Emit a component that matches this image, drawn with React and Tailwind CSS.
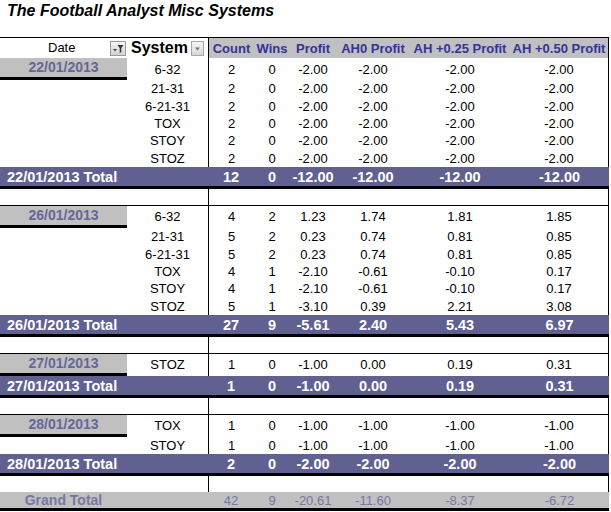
import React from 'react'

// Pivot table columns: Date | System | Count | Wins | Profit | AH0 | AH +0.25 | AH +0.50
const COLS = 'grid grid-cols-[127px_81px_46px_36px_46px_74px_100px_99px] w-[609px]'

const sections = [
  {
    date: '22/01/2013',
    rows: [
      ['6-32', 2, 0, '-2.00', '-2.00', '-2.00', '-2.00'],
      ['21-31', 2, 0, '-2.00', '-2.00', '-2.00', '-2.00'],
      ['6-21-31', 2, 0, '-2.00', '-2.00', '-2.00', '-2.00'],
      ['TOX', 2, 0, '-2.00', '-2.00', '-2.00', '-2.00'],
      ['STOY', 2, 0, '-2.00', '-2.00', '-2.00', '-2.00'],
      ['STOZ', 2, 0, '-2.00', '-2.00', '-2.00', '-2.00'],
    ],
    total: [12, 0, '-12.00', '-12.00', '-12.00', '-12.00'],
  },
  {
    date: '26/01/2013',
    rows: [
      ['6-32', 4, 2, '1.23', '1.74', '1.81', '1.85'],
      ['21-31', 5, 2, '0.23', '0.74', '0.81', '0.85'],
      ['6-21-31', 5, 2, '0.23', '0.74', '0.81', '0.85'],
      ['TOX', 4, 1, '-2.10', '-0.61', '-0.10', '0.17'],
      ['STOY', 4, 1, '-2.10', '-0.61', '-0.10', '0.17'],
      ['STOZ', 5, 1, '-3.10', '0.39', '2.21', '3.08'],
    ],
    total: [27, 9, '-5.61', '2.40', '5.43', '6.97'],
  },
  {
    date: '27/01/2013',
    rows: [['STOZ', 1, 0, '-1.00', '0.00', '0.19', '0.31']],
    total: [1, 0, '-1.00', '0.00', '0.19', '0.31'],
  },
  {
    date: '28/01/2013',
    rows: [
      ['TOX', 1, 0, '-1.00', '-1.00', '-1.00', '-1.00'],
      ['STOY', 1, 0, '-1.00', '-1.00', '-1.00', '-1.00'],
    ],
    total: [2, 0, '-2.00', '-2.00', '-2.00', '-2.00'],
  },
]

const grand = [42, 9, '-20.61', '-11.60', '-8.37', '-6.72']

function FilterBtn() {
  return (
    <div className="ml-auto mr-[1px] h-[15px] w-[16px] border border-[#9a9a9a] bg-gradient-to-b from-[#f6f6f6] to-[#d2d2d2]">
      <svg width="14" height="13" viewBox="0 0 14 13">
        <polygon points="2,7 6,7 4,9.5" fill="#444" />
        <path d="M6.5 3 H12.5 L10.3 6 V10 L8.7 11 V6 Z" fill="#333" />
      </svg>
    </div>
  )
}

function DropBtn() {
  return (
    <div className="ml-auto mr-[4px] h-[15px] w-[13px] border border-[#a8a8a8] bg-gradient-to-b from-[#f6f6f6] to-[#d8d8d8]">
      <svg width="11" height="13" viewBox="0 0 11 13">
        <polygon points="3,5.5 8,5.5 5.5,8.5" fill="#777" />
      </svg>
    </div>
  )
}

function Nums({ vals }) {
  return vals.map((v, i) => (
    <div
      key={i}
      className={`flex items-center justify-center ${i === 0 ? 'border-l border-black' : ''} ${i === vals.length - 1 ? 'border-r border-black' : ''}`}
    >
      {v}
    </div>
  ))
}

function Section({ s, first }) {
  return (
    <>
      {!first && <div className="h-px w-[609px] bg-black" />}
      {s.rows.map((r, i) => (
        <div key={r[0]} className={`${COLS} ${i === 0 ? 'h-[22px]' : 'h-[17.4px]'} text-[13px] leading-[15px]`}>
          {i === 0 ? (
            <div className="flex items-center justify-center border-b-[3px] border-black bg-[#c0c0c0] text-[14px] font-bold text-[#666699]">
              {s.date}
            </div>
          ) : (
            <div />
          )}
          <div className="flex items-center justify-center">{r[0]}</div>
          <Nums vals={r.slice(1)} />
        </div>
      ))}
      <div className={`${COLS} h-[22px] border-b-[3px] border-black bg-[#616191] pt-px text-[14.5px] font-bold leading-[16px] text-white`}>
        <div className="col-span-2 flex items-center pl-[7px]">{s.date} Total</div>
        {s.total.map((v, i) => (
          <div key={i} className="flex items-center justify-center">{v}</div>
        ))}
      </div>
      <div className={`${COLS} h-[16px]`}>
        <div />
        <div />
        <div className="col-span-6 border-x border-black" />
      </div>
    </>
  )
}

export default function App() {
  return (
    <div className="h-[512px] w-[611px] bg-white text-black [font-family:'Liberation_Sans',Arial,sans-serif]">
      <div className="h-[37px] pl-[7px] pt-[1px] text-[16px] font-bold italic leading-[20px]">
        The Football Analyst Misc Systems
      </div>

      <div className={`${COLS} h-[21px] border-t border-black leading-[16px]`}>
        <div className="flex items-center">
          <span className="ml-[48px] text-[13px]">Date</span>
          <FilterBtn />
        </div>
        <div className="flex items-center">
          <span className="pl-[4px] text-[16px] font-bold">System</span>
          <DropBtn />
        </div>
        {['Count', 'Wins', 'Profit', 'AH0 Profit', 'AH +0.25 Profit', 'AH +0.50 Profit'].map((h, i) => (
          <div
            key={h}
            className={`flex items-center justify-center whitespace-nowrap bg-[#c0c0c0] pt-px text-[13px] font-bold text-[#333399] ${i === 0 ? 'border-l border-black' : ''} ${i === 5 ? 'border-r border-black' : ''}`}
          >
            {h}
          </div>
        ))}
      </div>

      {sections.map((s, i) => (
        <Section key={s.date} s={s} first={i === 0} />
      ))}

      <div className={`${COLS} h-[19px] border-b-[3px] border-black bg-[#c0c0c0] pt-px text-[13px] leading-[15px] text-[#7777a3]`}>
        <div className="flex items-center justify-center text-[14px] font-bold">Grand Total</div>
        <div />
        {grand.map((v, i) => (
          <div key={i} className="flex items-center justify-center">{v}</div>
        ))}
      </div>
    </div>
  )
}
